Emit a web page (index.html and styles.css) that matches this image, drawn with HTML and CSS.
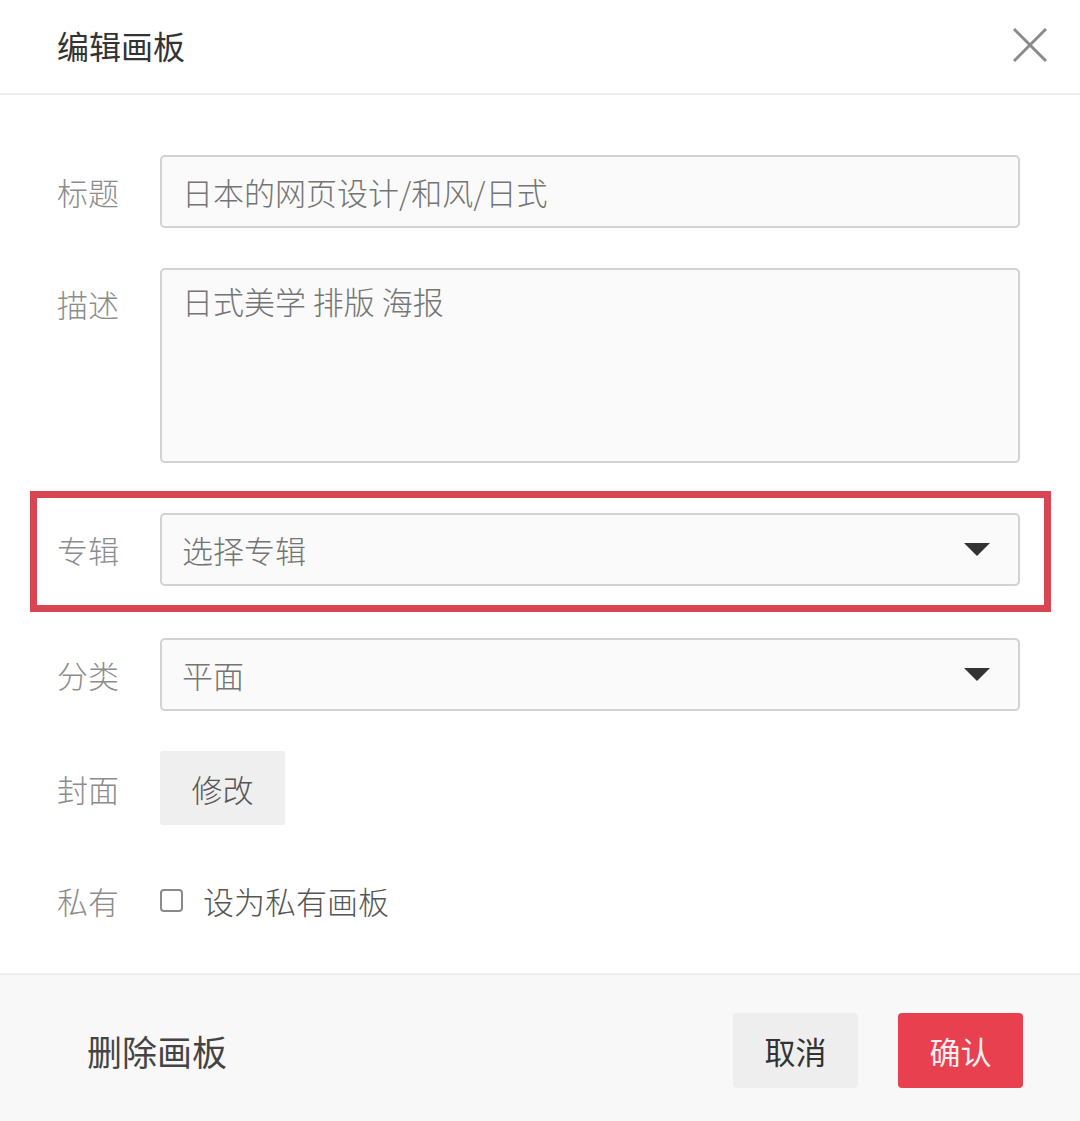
FILE: index.html
```html
<!DOCTYPE html>
<html lang="zh-CN">
<head>
<meta charset="utf-8">
<title>编辑画板</title>
<link rel="stylesheet" href="styles.css">
</head>
<body>
<div class="dialog">
  <div class="header">
    <div class="title">编辑画板</div>
    <div class="close">
      <svg width="34" height="34" viewBox="0 0 34 34"><path d="M1 1 L33 33 M33 1 L1 33" stroke="#8a8a8a" stroke-width="3" fill="none"/></svg>
    </div>
  </div>
  <div class="form">
    <div class="row row-title">
      <div class="label">标题</div>
      <div class="control field">日本的网页设计/和风/日式</div>
    </div>
    <div class="row row-desc">
      <div class="label">描述</div>
      <div class="control area">日式美学 排版 海报</div>
    </div>
    <div class="row row-album">
      <div class="label">专辑</div>
      <div class="control field select">选择专辑<span class="caret"></span></div>
      <div class="highlight"></div>
    </div>
    <div class="row row-cat">
      <div class="label">分类</div>
      <div class="control field select">平面<span class="caret"></span></div>
    </div>
    <div class="row row-cover">
      <div class="label">封面</div>
      <div class="btn-edit">修改</div>
    </div>
    <div class="row row-private">
      <div class="label">私有</div>
      <div class="check"></div>
      <div class="check-text">设为私有画板</div>
    </div>
  </div>
  <div class="footer">
    <div class="delete">删除画板</div>
    <div class="actions">
      <div class="btn btn-cancel">取消</div>
      <div class="btn btn-ok">确认</div>
    </div>
  </div>
</div>
</body>
</html>
```
FILE: styles.css
```css
* { box-sizing: border-box; }
html, body { margin: 0; padding: 0; background: #fff; }
body {
  font-family: "Noto Sans CJK SC", "Noto Sans", sans-serif;
  width: 1080px;
  height: 1121px;
  overflow: hidden;
}
.dialog { width: 1080px; }
.header {
  height: 95px;
  border-bottom: 2px solid #eeeeee;
  display: flex;
  align-items: center;
  justify-content: space-between;
  padding: 0 33px 0 57px;
}
.title { font-size: 32px; color: #333; line-height: 1; margin-top: -4px; }
.close { width: 34px; height: 34px; margin-top: -4px; }
.close svg { display: block; }

.form { padding: 60px 60px 48px 57px; }
.row { display: flex; align-items: center; position: relative; }
.label { width: 103px; flex: none; font-size: 31px; color: #8c8c8c; line-height: 1; font-weight: 300; }
.control {
  flex: 1;
  border: 2px solid #d2d2d2;
  border-radius: 5px;
  background: #fafafa;
  font-size: 31px;
  color: #747474;
  line-height: 1;
  font-weight: 300;
}
.field { height: 73px; display: flex; align-items: center; padding: 0 22px 0 20px; }
.area { height: 195px; padding: 15px 21px 15px 20px; }
.row-desc { margin-top: 40px; align-items: flex-start; }
.row-desc .label { padding-top: 20px; }
.row-album { margin-top: 50px; }
.row-cat { margin-top: 52px; }
.row-cover { margin-top: 40px; }
.row-private { margin-top: 50px; height: 50px; }
.select { justify-content: space-between; padding-right: 28px; }
.caret {
  width: 0; height: 0;
  border-left: 13px solid transparent;
  border-right: 13px solid transparent;
  border-top: 13px solid #333;
}
.highlight {
  position: absolute;
  left: -27px;
  top: -22px;
  width: 1021px;
  height: 121px;
  border: 7px solid #d84553;
  pointer-events: none;
}
.btn-edit {
  width: 125px;
  height: 74px;
  background: #efefef;
  border-radius: 3px;
  display: flex;
  align-items: center;
  justify-content: center;
  font-size: 31px;
  color: #555;
  font-weight: 300;
}
.check {
  width: 23px; height: 23px;
  border: 2px solid #8a8a8a;
  border-radius: 4px;
  margin-right: 20px;
  flex: none;
}
.check-text { font-size: 31px; color: #555; line-height: 1; font-weight: 300; }

.footer {
  height: 148px;
  background: #f8f8f8;
  border-top: 2px solid #eeeeee;
  display: flex;
  align-items: flex-start;
  justify-content: space-between;
  padding: 38px 57px 0 87px;
}
.delete { font-size: 35px; color: #444; line-height: 1; margin-top: 20px; }
.actions { display: flex; gap: 40px; }
.btn {
  width: 125px;
  height: 75px;
  border-radius: 4px;
  display: flex;
  align-items: center;
  justify-content: center;
  font-size: 31px;
}
.btn-cancel { background: #eeeeee; color: #333; }
.btn-ok { background: #e8404f; color: #fdeff1; }
```
